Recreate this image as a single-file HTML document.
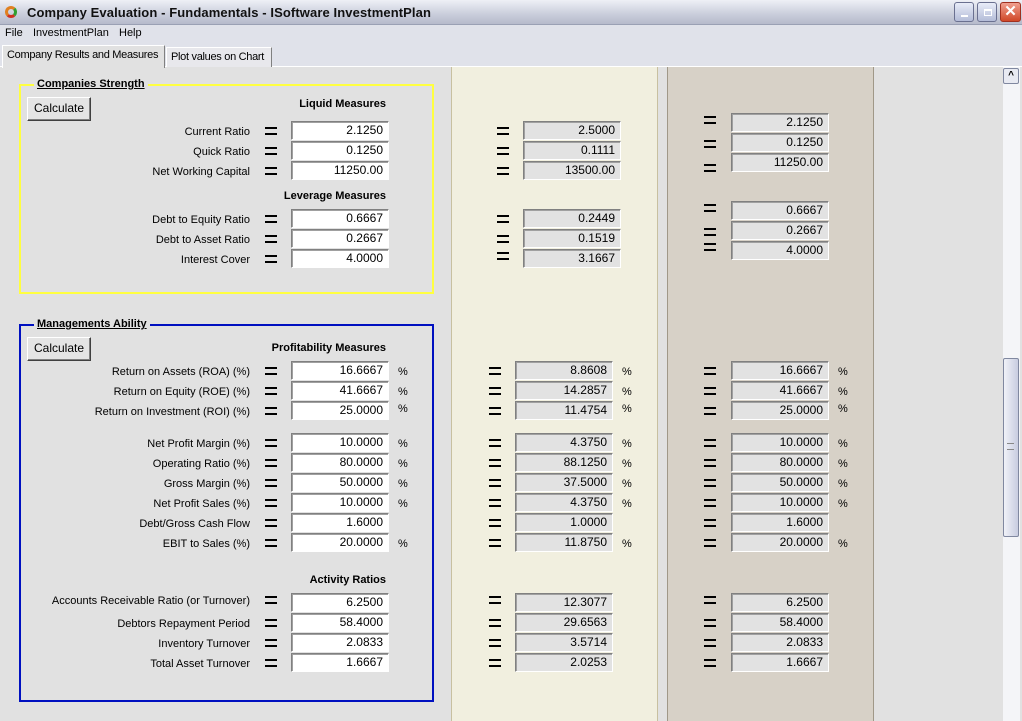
<!DOCTYPE html>
<html><head><meta charset="utf-8"><style>
*{margin:0;padding:0;box-sizing:border-box}
body{width:1022px;height:721px;overflow:hidden;background:#e1e1e1;font-family:"Liberation Sans",Arial,sans-serif;font-size:11px;color:#000;position:relative}
.a{position:absolute}
.t{position:absolute;left:0;top:0;width:1022px;height:25px;background:linear-gradient(#eef0f6,#c9cddb 60%,#b6bacb);border-bottom:1px solid #9aa0b4}
.t span{position:absolute;left:27px;top:5px;font-weight:bold;font-size:13px;color:#111;letter-spacing:0.1px}
.wb{position:absolute;top:2px;width:20px;height:20px;border:1px solid #6a7090;border-radius:3px;background:linear-gradient(#e8ecf8,#b4bcd8)}
.menu{position:absolute;top:25px;left:0;width:1022px;height:17px;background:#e0e2ea}
.menu span{position:absolute;top:2px;font-size:11px}
.tabs{position:absolute;top:42px;left:0;width:1022px;height:25px;background:#e0e2ea;border-bottom:1px solid #fff}
.tab{position:absolute;font-size:11px;padding:0 4px;background:#e1e1e1;border:1px solid #fff;border-right:1px solid #808080;border-bottom:none;white-space:nowrap;overflow:hidden;letter-spacing:-0.3px}
.f,.g{position:absolute;width:98px;height:19px;border:1px solid;border-color:#808080 #fff #fff #808080;box-shadow:inset 1px 1px 0 #a0a0a0;text-align:right;padding-right:5px;line-height:17px;font-size:12px}
.f{background:#fff}.g{background:#e2e2e2}
.e{position:absolute;width:12px;height:8px;border-top:2.5px solid #000;border-bottom:2.5px solid #000}
.l{position:absolute;right:772px;font-size:11px;white-space:nowrap;margin-top:1px}
.h{position:absolute;right:636px;font-weight:bold;font-size:11px}
.p{position:absolute;font-size:11px}
.btn{position:absolute;left:27px;width:64px;height:24px;background:#e4e4e4;border:1px solid;border-color:#fff #404040 #404040 #fff;box-shadow:inset -1px -1px 0 #808080;text-align:center;line-height:21px;font-size:12px}
.lg{position:absolute;left:34px;font-weight:bold;text-decoration:underline;background:#e1e1e1;padding:0 3px;font-size:11px}
</style></head><body>
<div class="t"><div class="a" style="left:5px;top:6px;width:12px;height:12px;border-radius:50%;border:3px solid #e08020;border-right-color:#30a030;border-bottom-color:#d03020"></div><span>Company Evaluation - Fundamentals - ISoftware InvestmentPlan</span>
<div class="wb" style="left:954px"><div class="a" style="left:6px;top:12px;width:7px;height:2px;background:#fff"></div></div>
<div class="wb" style="left:977px"><div class="a" style="left:6px;top:6px;width:8px;height:7px;border:1px solid #fff;border-top-width:2px"></div></div>
<div class="wb" style="left:1000px;width:21px;background:linear-gradient(#f0a090,#d04828);border-color:#a03020;color:#fff;font-size:15px;text-align:center;line-height:18px;font-weight:bold">✕</div></div>
<div class="menu"><span style="left:5px">File</span><span style="left:33px">InvestmentPlan</span><span style="left:119px">Help</span></div>
<div class="tabs"><div class="tab" style="left:2px;top:3px;width:163px;height:23px;line-height:19px">Company Results and Measures</div><div class="tab" style="left:166px;top:5px;width:106px;height:20px;line-height:18px;background:#e8e8ec">Plot values on Chart</div></div>

<div class="a" style="left:451px;top:67px;width:207px;height:654px;background:#f1efdf;border-left:1px solid #c8c0a0;border-right:1px solid #c8c0a0"></div>
<div class="a" style="left:667px;top:67px;width:207px;height:654px;background:#d7d1c7;border-left:1px solid #a09888;border-right:1px solid #a09888"></div>

<div class="a" style="left:1003px;top:67px;width:17px;height:654px;background:#f4f5f8"></div>
<div class="a" style="left:1003px;top:68px;width:16px;height:16px;border:1px solid #8088a0;border-radius:2px;background:#e8eaf2;text-align:center;font-size:10px;line-height:14px;font-weight:bold">^</div>
<div class="a" style="left:1003px;top:358px;width:16px;height:179px;border:1px solid #8088a0;border-radius:2px;background:linear-gradient(90deg,#f0f2f8,#c8cce0)"></div>
<div class="a" style="left:1007px;top:443px;width:7px;height:7px;border-top:1px solid #888;border-bottom:1px solid #888"></div>

<div class="a" style="left:19px;top:84px;width:415px;height:210px;border:2px solid #ffff40"></div>
<div class="lg" style="top:78px">Companies Strength</div>
<div class="btn" style="top:97px">Calculate</div>
<div class="h" style="top:98px">Liquid Measures</div>
<div class="h" style="top:190px">Leverage Measures</div>

<div class="a" style="left:19px;top:324px;width:415px;height:378px;border:2px solid #0010c0"></div>
<div class="lg" style="top:318px">Managements Ability</div>
<div class="btn" style="top:337px">Calculate</div>
<div class="h" style="top:342px">Profitability Measures</div>
<div class="h" style="top:574px">Activity Ratios</div>

<div class="l" style="top:125px">Current Ratio</div><div class="e" style="left:265px;top:127px"></div><div class="f" style="left:291px;top:121px">2.1250</div>
<div class="l" style="top:145px">Quick Ratio</div><div class="e" style="left:265px;top:147px"></div><div class="f" style="left:291px;top:141px">0.1250</div>
<div class="l" style="top:165px">Net Working Capital</div><div class="e" style="left:265px;top:167px"></div><div class="f" style="left:291px;top:161px">11250.00</div>
<div class="l" style="top:213px">Debt to Equity Ratio</div><div class="e" style="left:265px;top:215px"></div><div class="f" style="left:291px;top:209px">0.6667</div>
<div class="l" style="top:233px">Debt to Asset Ratio</div><div class="e" style="left:265px;top:235px"></div><div class="f" style="left:291px;top:229px">0.2667</div>
<div class="l" style="top:253px">Interest Cover</div><div class="e" style="left:265px;top:255px"></div><div class="f" style="left:291px;top:249px">4.0000</div>

<div class="l" style="top:365px">Return on Assets (ROA) (%)</div><div class="e" style="left:265px;top:367px"></div><div class="f" style="left:291px;top:361px">16.6667</div><div class="p" style="left:398px;top:366px">%</div>
<div class="l" style="top:385px">Return on Equity (ROE) (%)</div><div class="e" style="left:265px;top:387px"></div><div class="f" style="left:291px;top:381px">41.6667</div><div class="p" style="left:398px;top:386px">%</div>
<div class="l" style="top:405px">Return on Investment (ROI) (%)</div><div class="e" style="left:265px;top:407px"></div><div class="f" style="left:291px;top:401px">25.0000</div><div class="p" style="left:398px;top:403px">%</div>
<div class="l" style="top:437px">Net Profit Margin (%)</div><div class="e" style="left:265px;top:439px"></div><div class="f" style="left:291px;top:433px">10.0000</div><div class="p" style="left:398px;top:438px">%</div>
<div class="l" style="top:457px">Operating Ratio (%)</div><div class="e" style="left:265px;top:459px"></div><div class="f" style="left:291px;top:453px">80.0000</div><div class="p" style="left:398px;top:458px">%</div>
<div class="l" style="top:477px">Gross Margin (%)</div><div class="e" style="left:265px;top:479px"></div><div class="f" style="left:291px;top:473px">50.0000</div><div class="p" style="left:398px;top:478px">%</div>
<div class="l" style="top:497px">Net Profit Sales (%)</div><div class="e" style="left:265px;top:499px"></div><div class="f" style="left:291px;top:493px">10.0000</div><div class="p" style="left:398px;top:498px">%</div>
<div class="l" style="top:517px">Debt/Gross Cash Flow</div><div class="e" style="left:265px;top:519px"></div><div class="f" style="left:291px;top:513px">1.6000</div>
<div class="l" style="top:537px">EBIT to Sales (%)</div><div class="e" style="left:265px;top:539px"></div><div class="f" style="left:291px;top:533px">20.0000</div><div class="p" style="left:398px;top:538px">%</div>
<div class="l" style="top:594px">Accounts Receivable Ratio (or Turnover)</div><div class="e" style="left:265px;top:596px"></div><div class="f" style="left:291px;top:593px">6.2500</div>
<div class="l" style="top:617px">Debtors Repayment Period</div><div class="e" style="left:265px;top:619px"></div><div class="f" style="left:291px;top:613px">58.4000</div>
<div class="l" style="top:637px">Inventory Turnover</div><div class="e" style="left:265px;top:639px"></div><div class="f" style="left:291px;top:633px">2.0833</div>
<div class="l" style="top:657px">Total Asset Turnover</div><div class="e" style="left:265px;top:659px"></div><div class="f" style="left:291px;top:653px">1.6667</div>

<div class="e" style="left:497px;top:127px"></div><div class="g" style="left:523px;top:121px">2.5000</div>
<div class="e" style="left:497px;top:147px"></div><div class="g" style="left:523px;top:141px">0.1111</div>
<div class="e" style="left:497px;top:167px"></div><div class="g" style="left:523px;top:161px">13500.00</div>
<div class="e" style="left:497px;top:215px"></div><div class="g" style="left:523px;top:209px">0.2449</div>
<div class="e" style="left:497px;top:235px"></div><div class="g" style="left:523px;top:229px">0.1519</div>
<div class="e" style="left:497px;top:252px"></div><div class="g" style="left:523px;top:249px">3.1667</div>

<div class="e" style="left:489px;top:367px"></div><div class="g" style="left:515px;top:361px">8.8608</div><div class="p" style="left:622px;top:366px">%</div>
<div class="e" style="left:489px;top:387px"></div><div class="g" style="left:515px;top:381px">14.2857</div><div class="p" style="left:622px;top:386px">%</div>
<div class="e" style="left:489px;top:407px"></div><div class="g" style="left:515px;top:401px">11.4754</div><div class="p" style="left:622px;top:403px">%</div>
<div class="e" style="left:489px;top:439px"></div><div class="g" style="left:515px;top:433px">4.3750</div><div class="p" style="left:622px;top:438px">%</div>
<div class="e" style="left:489px;top:459px"></div><div class="g" style="left:515px;top:453px">88.1250</div><div class="p" style="left:622px;top:458px">%</div>
<div class="e" style="left:489px;top:479px"></div><div class="g" style="left:515px;top:473px">37.5000</div><div class="p" style="left:622px;top:478px">%</div>
<div class="e" style="left:489px;top:499px"></div><div class="g" style="left:515px;top:493px">4.3750</div><div class="p" style="left:622px;top:498px">%</div>
<div class="e" style="left:489px;top:519px"></div><div class="g" style="left:515px;top:513px">1.0000</div>
<div class="e" style="left:489px;top:539px"></div><div class="g" style="left:515px;top:533px">11.8750</div><div class="p" style="left:622px;top:538px">%</div>
<div class="e" style="left:489px;top:596px"></div><div class="g" style="left:515px;top:593px">12.3077</div>
<div class="e" style="left:489px;top:619px"></div><div class="g" style="left:515px;top:613px">29.6563</div>
<div class="e" style="left:489px;top:639px"></div><div class="g" style="left:515px;top:633px">3.5714</div>
<div class="e" style="left:489px;top:659px"></div><div class="g" style="left:515px;top:653px">2.0253</div>

<div class="e" style="left:704px;top:116px"></div><div class="g" style="left:731px;top:113px">2.1250</div>
<div class="e" style="left:704px;top:140px"></div><div class="g" style="left:731px;top:133px">0.1250</div>
<div class="e" style="left:704px;top:164px"></div><div class="g" style="left:731px;top:153px">11250.00</div>
<div class="e" style="left:704px;top:204px"></div><div class="g" style="left:731px;top:201px">0.6667</div>
<div class="e" style="left:704px;top:228px"></div><div class="g" style="left:731px;top:221px">0.2667</div>
<div class="e" style="left:704px;top:243px"></div><div class="g" style="left:731px;top:241px">4.0000</div>

<div class="e" style="left:704px;top:367px"></div><div class="g" style="left:731px;top:361px">16.6667</div><div class="p" style="left:838px;top:366px">%</div>
<div class="e" style="left:704px;top:387px"></div><div class="g" style="left:731px;top:381px">41.6667</div><div class="p" style="left:838px;top:386px">%</div>
<div class="e" style="left:704px;top:407px"></div><div class="g" style="left:731px;top:401px">25.0000</div><div class="p" style="left:838px;top:403px">%</div>
<div class="e" style="left:704px;top:439px"></div><div class="g" style="left:731px;top:433px">10.0000</div><div class="p" style="left:838px;top:438px">%</div>
<div class="e" style="left:704px;top:459px"></div><div class="g" style="left:731px;top:453px">80.0000</div><div class="p" style="left:838px;top:458px">%</div>
<div class="e" style="left:704px;top:479px"></div><div class="g" style="left:731px;top:473px">50.0000</div><div class="p" style="left:838px;top:478px">%</div>
<div class="e" style="left:704px;top:499px"></div><div class="g" style="left:731px;top:493px">10.0000</div><div class="p" style="left:838px;top:498px">%</div>
<div class="e" style="left:704px;top:519px"></div><div class="g" style="left:731px;top:513px">1.6000</div>
<div class="e" style="left:704px;top:539px"></div><div class="g" style="left:731px;top:533px">20.0000</div><div class="p" style="left:838px;top:538px">%</div>
<div class="e" style="left:704px;top:596px"></div><div class="g" style="left:731px;top:593px">6.2500</div>
<div class="e" style="left:704px;top:619px"></div><div class="g" style="left:731px;top:613px">58.4000</div>
<div class="e" style="left:704px;top:639px"></div><div class="g" style="left:731px;top:633px">2.0833</div>
<div class="e" style="left:704px;top:659px"></div><div class="g" style="left:731px;top:653px">1.6667</div>
</body></html>
